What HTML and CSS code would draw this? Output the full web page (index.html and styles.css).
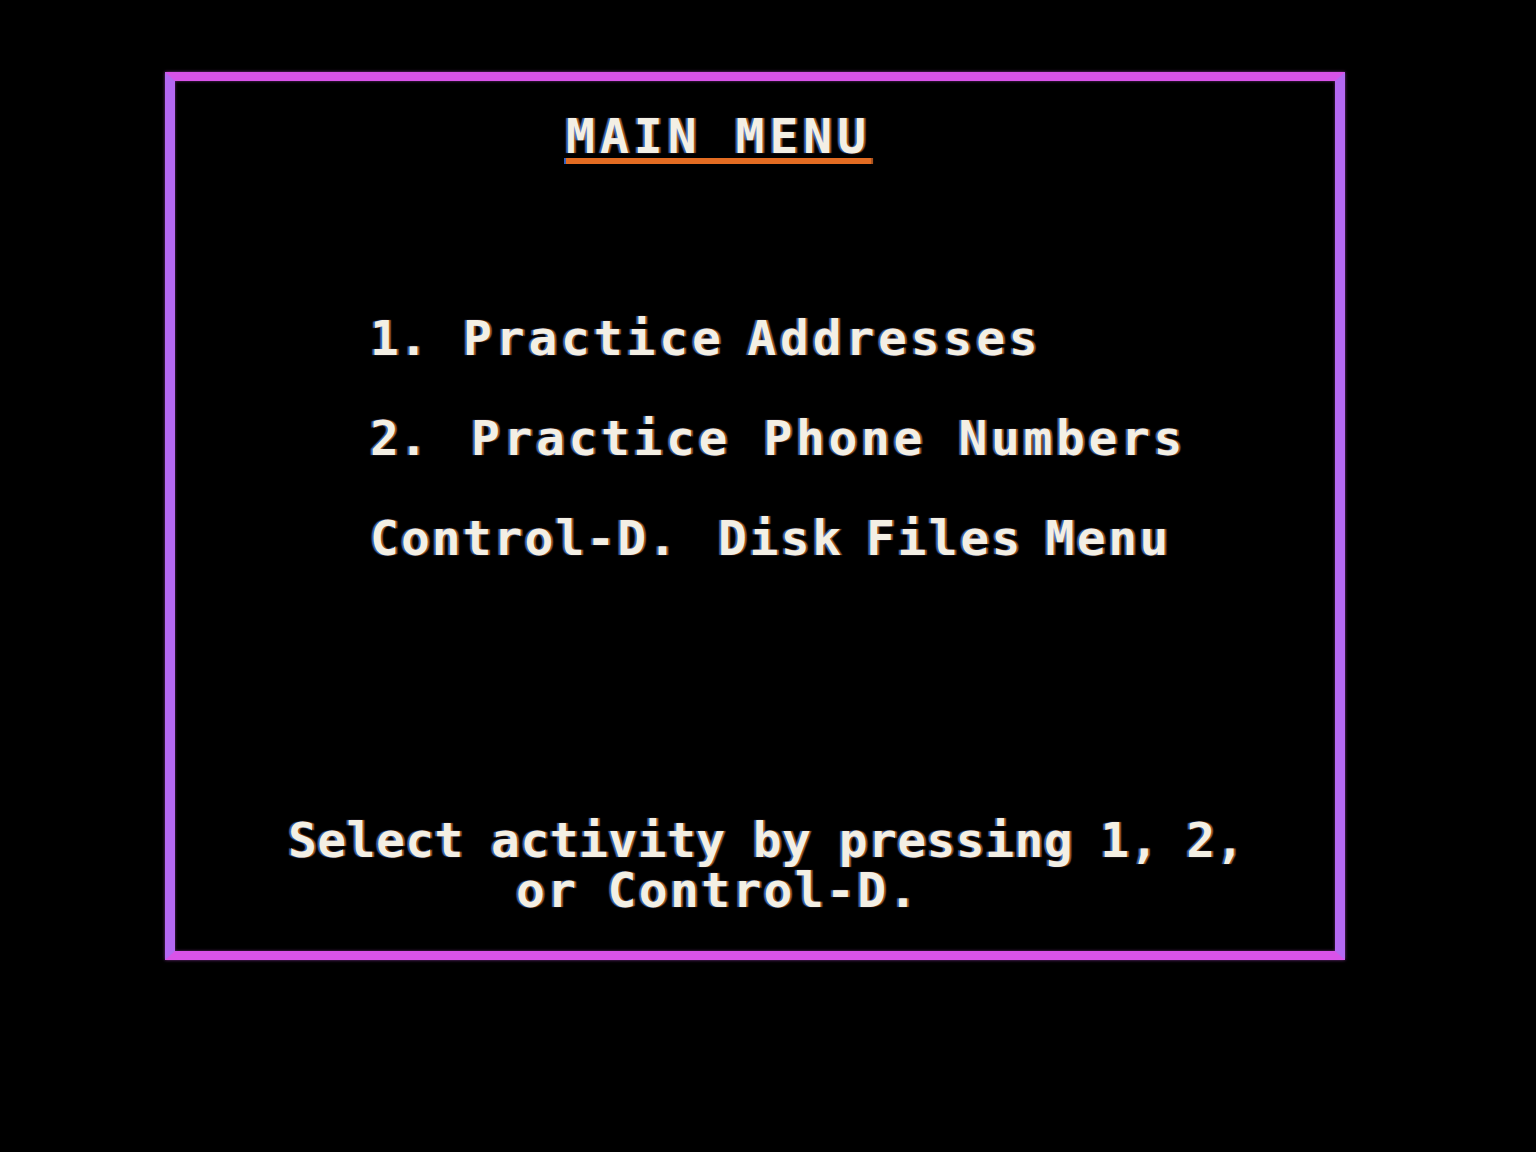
FILE: index.html
```html
<!DOCTYPE html>
<html>
<head>
<meta charset="utf-8">
<title>Main Menu</title>
<link rel="stylesheet" href="styles.css">
</head>
<body>
<div class="screen">
  <div class="frame">
    <div class="title"><span class="title-text">MAIN MENU</span></div>
    <div class="menu">
      <div class="item item-a"><span class="key">1.</span><span class="label">Practice Addresses</span></div>
      <div class="item item-b"><span class="key">2.</span><span class="label">Practice Phone Numbers</span></div>
      <div class="item item-c"><span class="key">Control-D.</span><span class="label">Disk Files Menu</span></div>
    </div>
    <div class="prompt">
      <div class="prompt-line prompt-1">Select activity by pressing 1, 2,</div>
      <div class="prompt-line prompt-2">or Control-D.</div>
    </div>
  </div>
</div>
</body>
</html>
```

FILE: styles.css
```css
html, body {
  margin: 0;
  padding: 0;
  background: #000;
}

.screen {
  width: 1536px;
  height: 1152px;
  background: #000;
  padding: 72px 0 0 165px;
  box-sizing: border-box;
  font-family: "DejaVu Sans Mono", "Liberation Mono", monospace;
  font-weight: bold;
  font-size: 48px;
  line-height: 50px;
  color: #f3efe4;
  text-shadow: -2px 0 1px rgba(70, 130, 255, 0.75), 2px 0 1px rgba(225, 110, 40, 0.75);
}

.frame {
  width: 1180px;
  height: 888px;
  box-sizing: border-box;
  border-style: solid;
  border-width: 9px 10px;
  border-top-color: #d853e8;
  border-bottom-color: #d853e8;
  border-left-color: #b468f2;
  border-right-color: #b468f2;
  box-shadow: 0 0 3px rgba(200, 80, 230, 0.6), inset 0 0 3px rgba(200, 80, 230, 0.5);
  display: flex;
  flex-direction: column;
}

.title {
  margin-top: 30px;
  padding-left: 391px;
  height: 50px;
}

.title-text {
  letter-spacing: 5px;
  text-decoration: underline;
  text-decoration-color: #e36c22;
  text-decoration-thickness: 6px;
  text-underline-offset: 5px;
  text-decoration-skip-ink: none;
}

.menu {
  margin-top: 152px;
  display: flex;
  flex-direction: column;
  gap: 50px;
}

.item {
  display: flex;
  padding-left: 195px;
  height: 50px;
  white-space: pre;
}

.key {
  flex: none;
}

.item-a .key { width: 93px; }
.item-b .key { width: 101px; }
.item-c .key { width: 348px; letter-spacing: 2px; }

.item-a .label { letter-spacing: 3.8px; word-spacing: -10px; }
.item-b .label { letter-spacing: 3.6px; }
.item-c .label { letter-spacing: 2.5px; word-spacing: -9px; }

.prompt {
  margin-top: 252px;
  display: flex;
  flex-direction: column;
}

.prompt-line {
  height: 50px;
  white-space: pre;
}

.prompt-1 {
  padding-left: 113px;
  letter-spacing: 0.4px;
  word-spacing: -2px;
}

.prompt-2 {
  padding-left: 341px;
  letter-spacing: 2.3px;
  word-spacing: -2px;
}
```
